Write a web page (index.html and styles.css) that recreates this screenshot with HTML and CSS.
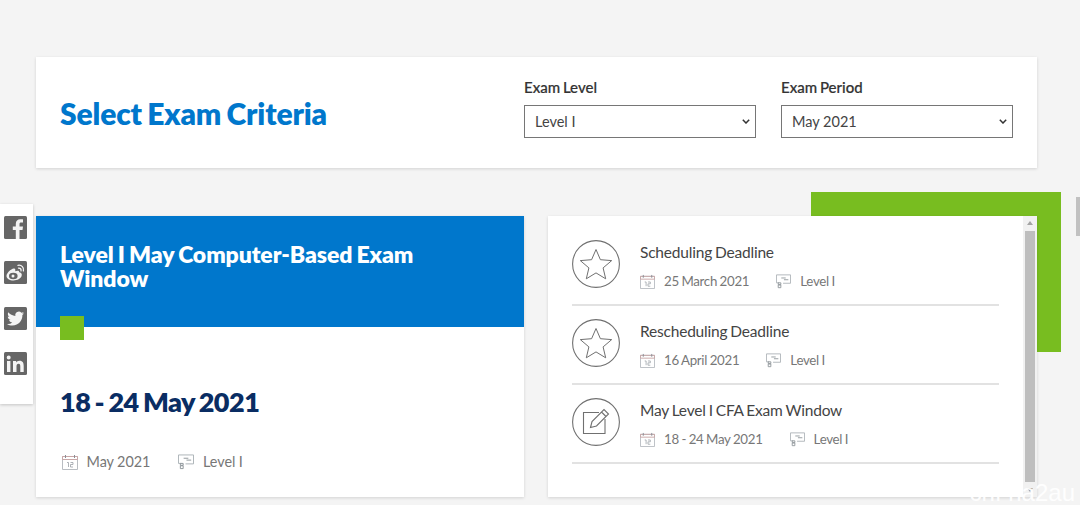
FILE: index.html
```html
<!DOCTYPE html>
<html lang="en">
<head>
<meta charset="utf-8">
<title>Select Exam Criteria</title>
<link rel="stylesheet" href="styles.css">
</head>
<body>
<svg class="defs" width="0" height="0" aria-hidden="true">
  <symbol id="cal" viewBox="0 0 16 16">
    <path d="M.5 2.500h15v13H.5z" fill="none" stroke="#b9bdc2"/>
    <path d="M.5 2.500h15v3H.5z" fill="none" stroke="#c9a7a7"/>
    <path d="M3.500 1v3M12.500 1v3" stroke="#8a8f96"/>
    <path d="M5 8.500h1.500v4.500M8.500 8.500h2.500v2h-2.500v2.500h2.500" fill="none" stroke="#9aa0a6" stroke-width=".8"/>
  </symbol>
  <symbol id="lvl" viewBox="0 0 17 16">
    <path d="M3.500 9.500H.5V.5h16v9.500H8" fill="none" stroke="#aab1b5"/>
    <path d="M6 4h5M9 6h5" stroke="#8d9499"/>
    <path d="M2.500 9.500h3v2h-3zM2.500 12h3v3h-3z" fill="none" stroke="#8d9499"/>
  </symbol>
  <symbol id="star" viewBox="0 0 48 48">
    <circle cx="24" cy="24" r="23.400" fill="none" stroke="#707070" stroke-width="1.100"/>
    <path d="M24 9.500l4.400 10.200 11.300.9-8.600 7.300 2.600 10.900-9.700-5.900-9.700 5.900 2.600-10.900-8.600-7.300 11.300-.9z" fill="none" stroke="#707070" stroke-width="1"/>
  </symbol>
  <symbol id="edit" viewBox="0 0 48 48">
    <circle cx="24" cy="24" r="23.400" fill="none" stroke="#707070" stroke-width="1.100"/>
    <path d="M27 14.500H11.500v21H33V21" fill="none" stroke="#707070" stroke-width="1.100"/>
    <path d="M18.500 29.500l1.500-6 12-12 4.500 4.500-12 12zM29.500 14l4.500 4.500" fill="none" stroke="#707070" stroke-width="1.100"/>
  </symbol>
</svg>

<aside class="share">
  <svg class="share-icon" viewBox="0 0 23 23"><rect width="23" height="23" rx="1.500" fill="#666"/><path d="M15.500 23v-9h3l.5-3.500h-3.500V8.300c0-1 .3-1.700 1.800-1.700H19V3.400c-.4 0-1.500-.1-2.700-.1-2.700 0-4.500 1.600-4.500 4.600v2.600H8.800V14h3v9z" fill="#f4f4f4"/></svg>
  <svg class="share-icon" viewBox="0 0 23 23"><rect width="23" height="23" rx="1.500" fill="#666"/><path d="M9.500 19.500c-4 0-7-1.900-7-4.500 0-2.900 4.300-7.100 7.400-7.500 1.600-.1 1.600 1.400 1.300 2.700 1.800-.8 4.200-.9 4 1.100 3.100.8 2.700 2.500 2.400 3.800-.9 2.700-4.300 4.400-8.100 4.400z" fill="#f4f4f4"/><ellipse cx="9.300" cy="15" rx="4.300" ry="3.200" fill="#666"/><circle cx="9" cy="15.100" r="1.500" fill="#f4f4f4"/><path d="M14 4.300c3.600-.6 6.300 2.200 5.400 5.600M14.500 7.100c1.800-.2 2.900 1.100 2.500 2.800" fill="none" stroke="#f4f4f4" stroke-width="1.300" stroke-linecap="round"/></svg>
  <svg class="share-icon" viewBox="0 0 23 23"><rect width="23" height="23" rx="1.500" fill="#666"/><path d="M20 6.300c-.7.300-1.300.5-2 .6.700-.5 1.300-1.100 1.600-2-.7.400-1.400.7-2.200.9a3.500 3.500 0 0 0-6 3.200C8.500 8.800 6 7.400 4.300 5.300c-.9 1.600-.4 3.700 1.100 4.700-.6 0-1.100-.2-1.600-.4 0 1.700 1.200 3.100 2.800 3.400-.5.100-1 .2-1.600.1.400 1.400 1.700 2.400 3.300 2.400A7 7 0 0 1 3 17c1.600 1 3.400 1.600 5.400 1.600 6.500 0 10.200-5.500 10-10.500.6-.5 1.200-1.100 1.600-1.800z" fill="#f4f4f4"/></svg>
  <svg class="share-icon" viewBox="0 0 23 23"><rect width="23" height="23" rx="1.500" fill="#666"/><path d="M3 9h3.400v11H3zM4.700 3.500a2 2 0 1 1 0 4 2 2 0 0 1 0-4zM9 9h3.200v1.500c.5-.9 1.600-1.800 3.300-1.800 3.500 0 4.200 2.300 4.200 5.300v6h-3.400v-5.300c0-1.300 0-2.900-1.800-2.900s-2 1.400-2 2.800V20H9z" fill="#f4f4f4"/></svg>
</aside>

<main class="page">
  <section class="criteria">
    <h1 class="criteria-title">Select Exam Criteria</h1>
    <div class="filters">
      <label class="filter">
        <span class="filter-label">Exam Level</span>
        <select class="filter-select"><option>Level I</option></select>
      </label>
      <label class="filter">
        <span class="filter-label">Exam Period</span>
        <select class="filter-select"><option>May 2021</option></select>
      </label>
    </div>
  </section>

  <section class="columns">
    <article class="summary">
      <header class="summary-head">
        <h2 class="summary-title">Level I May Computer-Based Exam Window</h2>
        <span class="summary-tab"></span>
      </header>
      <p class="summary-date">18 - 24 May 2021</p>
      <div class="meta summary-meta">
        <span class="meta-item"><svg class="meta-icon"><use href="#cal"/></svg>May 2021</span>
        <span class="meta-item"><svg class="meta-icon"><use href="#lvl"/></svg>Level I</span>
      </div>
    </article>

    <div class="events-wrap">
      <span class="accent"></span>
      <div class="events">
        <ul class="event-list">
          <li class="event">
            <svg class="event-icon"><use href="#star"/></svg>
            <div class="event-body">
              <h3 class="event-title">Scheduling Deadline</h3>
              <div class="meta">
                <span class="meta-item"><svg class="meta-icon"><use href="#cal"/></svg>25 March 2021</span>
                <span class="meta-item"><svg class="meta-icon"><use href="#lvl"/></svg>Level I</span>
              </div>
            </div>
          </li>
          <li class="event">
            <svg class="event-icon"><use href="#star"/></svg>
            <div class="event-body">
              <h3 class="event-title">Rescheduling Deadline</h3>
              <div class="meta">
                <span class="meta-item"><svg class="meta-icon"><use href="#cal"/></svg>16 April 2021</span>
                <span class="meta-item"><svg class="meta-icon"><use href="#lvl"/></svg>Level I</span>
              </div>
            </div>
          </li>
          <li class="event">
            <svg class="event-icon"><use href="#edit"/></svg>
            <div class="event-body">
              <h3 class="event-title">May Level I CFA Exam Window</h3>
              <div class="meta">
                <span class="meta-item"><svg class="meta-icon"><use href="#cal"/></svg>18 - 24 May 2021</span>
                <span class="meta-item"><svg class="meta-icon"><use href="#lvl"/></svg>Level I</span>
              </div>
            </div>
          </li>
        </ul>
        <div class="scrollbar">
          <span class="scroll-arrow scroll-up"></span>
          <span class="scroll-thumb"></span>
          <span class="scroll-arrow scroll-down"></span>
        </div>
      </div>
    </div>
  </section>
</main>

<span class="page-scroll"></span>
<span class="watermark">cnf ha2au</span>
</body>
</html>
```

FILE: styles.css
```css
* { box-sizing: border-box; }
html, body { height: 100%; margin: 0; overflow: hidden; }
body {
  background: #f4f4f4;
  font-family: Lato, "Liberation Sans", sans-serif;
  color: #333;
  position: relative;
}
.defs { position: absolute; }
.page { padding: 57px 43px 0 36px; }

.criteria {
  height: 111px;
  background: #fff;
  box-shadow: 0 1px 3px rgba(0,0,0,.14);
  display: flex;
  align-items: center;
  justify-content: space-between;
  padding: 0 24px;
}
.criteria-title {
  margin: 1px 0 0;
  font-size: 30px;
  font-weight: 800;
  color: #0077cc;
  line-height: 36px;
  word-spacing: -1.500px;
  letter-spacing: -.15px;
}
.filters { display: flex; gap: 25px; margin-top: -11px; }
.filter { display: flex; flex-direction: column; width: 232px; }
.filter-label { font-size: 15px; font-weight: 500; line-height: 20px; margin-bottom: 8px; color: #333; word-spacing: -1px; -webkit-text-stroke: .2px #333; }
.filter-select {
  appearance: none;
  height: 33px;
  width: 232px;
  background: #fff url("data:image/svg+xml,%3Csvg xmlns='http://www.w3.org/2000/svg' width='8' height='5'%3E%3Cpath d='M.8.8 4 4l3.200-3.200' fill='none' stroke='%23333' stroke-width='1.500'/%3E%3C/svg%3E") no-repeat right 5px center;
  border: 1px solid #767676;
  border-radius: 0;
  padding: 0 10px;
  font-family: Lato, sans-serif;
  font-size: 14.500px;
  color: #444;
}

.columns { display: flex; gap: 24px; margin-top: 48px; }
.summary {
  width: 488px;
  height: 281px;
  background: #fff;
  box-shadow: 0 1px 3px rgba(0,0,0,.14);
  position: relative;
}
.summary-head {
  height: 111px;
  background: #0077cc;
  padding: 26px 24px 0;
  position: relative;
}
.summary-title {
  margin: 0;
  font-size: 23px;
  line-height: 24px;
  font-weight: 800;
  color: #fff;
  letter-spacing: -.1px;
  word-spacing: -1px;
}
.summary-tab {
  position: absolute;
  left: 24px;
  bottom: -13px;
  width: 24px;
  height: 24px;
  background: #78bd20;
}
.summary-date {
  margin: 58px 24px 0;
  font-size: 27px;
  font-weight: 800;
  line-height: 34px;
  color: #0a2d63;
  letter-spacing: -.5px;
  word-spacing: -1.500px;
}

.meta { display: flex; gap: 27px; font-size: 13.300px; color: #777; line-height: 18px; word-spacing: -.5px; letter-spacing: -.3px; }
.meta-item { display: inline-flex; align-items: center; gap: 9px; }
.meta-icon { width: 15px; height: 15px; flex: none; }
.summary-meta { margin: 34px 0 0 26px; font-size: 14.400px; gap: 28px; word-spacing: -.3px; letter-spacing: 0; }
.summary-meta .meta-icon { width: 16px; height: 16px; }
.summary-meta .meta-item { gap: 8.500px; }

.events-wrap { position: relative; width: 489px; height: 281px; }
.accent {
  position: absolute;
  right: -24px;
  top: -24px;
  width: 250px;
  height: 160px;
  background: #78bd20;
}
.events {
  position: relative;
  height: 100%;
  background: #fff;
  box-shadow: 0 1px 3px rgba(0,0,0,.14);
  display: flex;
  justify-content: space-between;
}
.event-list { list-style: none; margin: 0; padding: 11px 0 0 24px; width: 451px; }
.event {
  height: 79px;
  border-bottom: 2px solid #e2e2e2;
  display: flex;
  align-items: flex-start;
  gap: 20px;
  padding-top: 13px;
}
.event-icon { width: 48px; height: 48px; flex: none; }
.event-body { padding-top: 1px; }
.event-title { margin: 0 0 9px; font-size: 15.500px; font-weight: 400; line-height: 22px; color: #444; letter-spacing: -.2px; word-spacing: -.8px; }

.scrollbar {
  width: 14px;
  background: #f1f1f1;
  display: flex;
  flex-direction: column;
  align-items: flex-start;
  justify-content: space-between;
  height: 100%;
  padding: 5px 0 5px 2px;
}
.scroll-arrow { width: 0; height: 0; margin-left: 2px; border-left: 3px solid transparent; border-right: 3px solid transparent; }
.scroll-up { border-bottom: 4px solid #a3a3a3; }
.scroll-down { border-top: 4px solid #a3a3a3; }
.scroll-thumb { width: 10px; height: 251px; background: #bebebe; }

.share {
  position: absolute;
  left: 0;
  top: 204px;
  width: 33px;
  height: 200px;
  background: #fff;
  box-shadow: 0 1px 3px rgba(0,0,0,.2);
  display: flex;
  flex-direction: column;
  gap: 22.300px;
  padding: 12px 0 0 4px;
}
.share-icon { width: 23px; height: 23px; flex: none; }

.page-scroll {
  position: absolute;
  right: 0;
  top: 197px;
  width: 4px;
  height: 39px;
  background: #c1c1c1;
}
.watermark {
  position: absolute;
  right: 5px;
  bottom: 0;
  font-family: "Liberation Sans", sans-serif;
  font-size: 24px;
  line-height: 24px;
  color: rgba(255,255,255,.95);
}
```
